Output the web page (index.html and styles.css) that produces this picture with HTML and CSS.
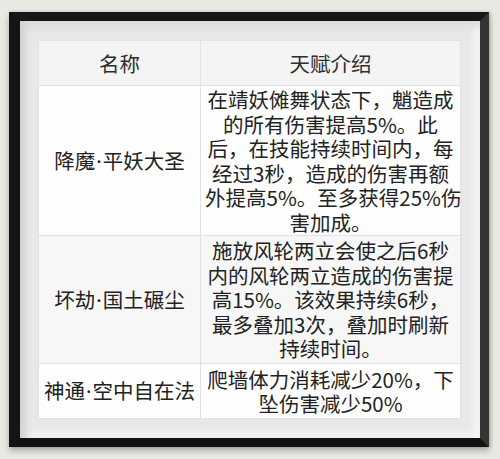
FILE: index.html
```html
<!DOCTYPE html>
<html lang="zh">
<head>
<meta charset="utf-8">
<title>天赋介绍</title>
<link rel="stylesheet" href="styles.css">
</head>
<body>
<div class="frame">
  <div class="mat">
    <table class="talents">
      <colgroup><col class="c-name"><col class="c-desc"></colgroup>
      <tr class="head">
        <th>名称</th>
        <th>天赋介绍</th>
      </tr>
      <tr class="r1">
        <td class="name">降魔<span class="dot">·</span>平妖大圣</td>
        <td class="desc"><span class="ln">在靖妖傩舞状态下，魈造成</span><span class="ln">的所有伤害提高5%。此</span><span class="ln">后，在技能持续时间内，每</span><span class="ln">经过3秒，造成的伤害再额</span><span class="ln">外提高5%。至多获得25%伤</span><span class="ln">害加成。</span></td>
      </tr>
      <tr class="r2">
        <td class="name">坏劫<span class="dot">·</span>国土碾尘</td>
        <td class="desc"><span class="ln">施放风轮两立会使之后6秒</span><span class="ln">内的风轮两立造成的伤害提</span><span class="ln">高15%。该效果持续6秒，</span><span class="ln">最多叠加3次，叠加时刷新</span><span class="ln">持续时间。</span></td>
      </tr>
      <tr class="r3">
        <td class="name">神通<span class="dot">·</span>空中自在法</td>
        <td class="desc"><span class="ln">爬墙体力消耗减少20%，下</span><span class="ln">坠伤害减少50%</span></td>
      </tr>
    </table>
  </div>
</div>
</body>
</html>
```
FILE: styles.css
```css
html, body {
  margin: 0;
  padding: 0;
}
body {
  background: #e9e8e2;
  width: 500px;
  height: 459px;
  overflow: hidden;
  padding-top: 12px;
  padding-left: 9px;
  box-sizing: border-box;
  font-family: "Noto Sans CJK SC", "Noto Sans", sans-serif;
}
.frame {
  width: 480px;
  height: 435px;
  box-sizing: border-box;
  border-style: solid;
  border-width: 9px 9px 9px 11px;
  border-color: #161616 #343434 #121212 #141414;
  box-shadow: 0 4px 6px rgba(0, 0, 0, 0.25), 2px 0 3px rgba(0, 0, 0, 0.15);
}
.mat {
  height: 100%;
  box-sizing: border-box;
  padding: 19px 20px 20px 18px;
  background: #e8e8e8;
  box-shadow:
    inset 10px 0 6px -4px #d4d4d4,
    inset 0 10px 8px -4px #dcdcdc,
    inset -10px 0 6px -4px #f6f6f6,
    inset 0 -10px 6px -4px #f0f0f0;
}
.talents {
  width: 422px;
  height: 378px;
  table-layout: fixed;
  border-collapse: collapse;
  color: #222;
  font-size: 20.5px;
  line-height: 24.5px;
}
.c-name { width: 162px; }
.c-desc { width: 260px; }
.talents th, .talents td {
  border: 1px solid #e2e2e2;
  text-align: center;
  vertical-align: middle;
  white-space: nowrap;
  padding: 0 4px;
  font-weight: normal;
}
.head { height: 45px; background: #f4f4f4; }
.head th { color: #2e2e2e; }
.r1 { height: 150px; background: #fefefe; }
.r2 { height: 128px; background: #f7f7f7; }
.r3 { height: 55px; background: #fefefe; }
.name { padding: 0 2px; }
.ln {
  display: block;
  height: 24.5px;
}
.dot {
  font-family: "Noto Sans", "DejaVu Sans", sans-serif;
  margin: 0 1px;
}
```
